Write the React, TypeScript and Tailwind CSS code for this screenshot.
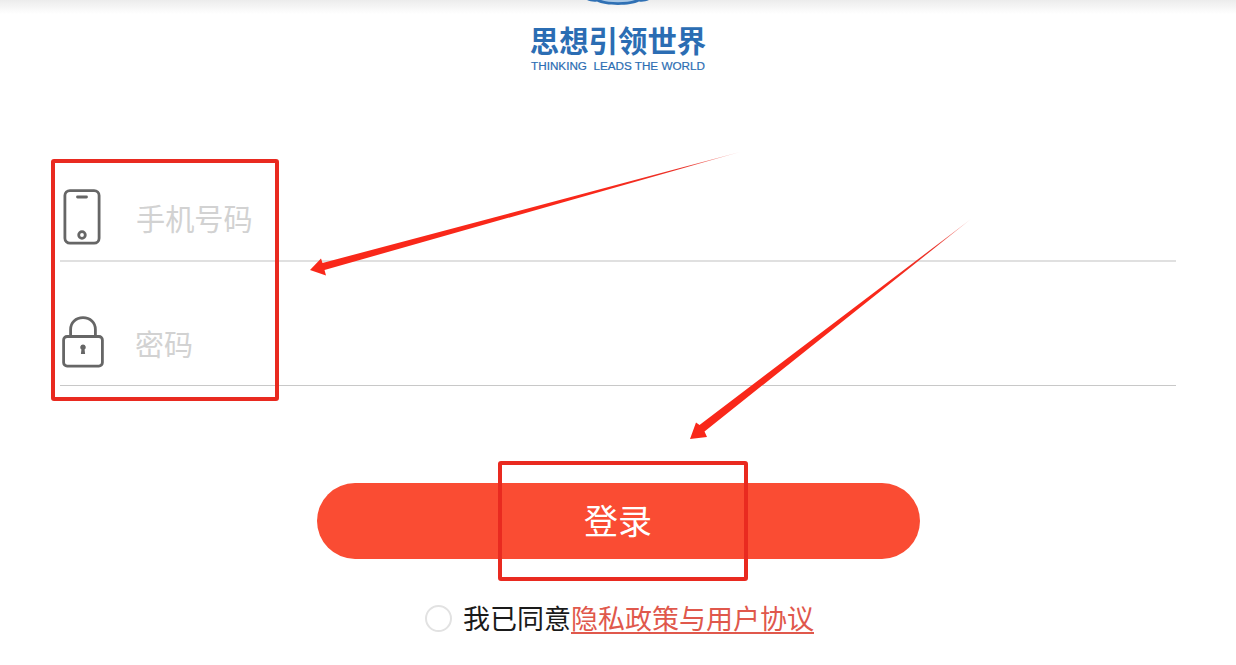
const CJK = "font-['Noto_Sans_CJK_SC','Noto_Sans',sans-serif]";

function PhoneIcon() {
  return (
    <svg width="38" height="56" viewBox="0 0 38 56" fill="none" stroke="#666666" strokeWidth="2.8">
      <rect x="1.9" y="1.6" width="34.2" height="52.6" rx="5" />
      <path d="M14.5 8h9" strokeWidth="2.8" strokeLinecap="round" />
      <circle cx="19" cy="46" r="3.3" />
    </svg>
  );
}

function LockIcon() {
  return (
    <svg width="42" height="52" viewBox="0 0 42 52" fill="none" stroke="#666666" strokeWidth="2.8">
      <path d="M8.6 21V13.5C8.6 6.5 13.8 1.6 21 1.6S33.4 6.5 33.4 13.5V21" />
      <rect x="1.6" y="20.5" width="38.8" height="29.6" rx="3.5" />
      <path d="M21 28.5a2.8 2.8 0 0 1 1.6 5.1l.5 4.4h-4.2l.5-4.4A2.8 2.8 0 0 1 21 28.5z" fill="#666666" stroke="none" />
    </svg>
  );
}

function Annotations() {
  return (
    <>
      <div className="absolute left-[51px] top-[159px] h-[242px] w-[228px] rounded-[3px] border-4 border-[#e92a20]" />
      <div className="absolute left-[498px] top-[461px] h-[120px] w-[250px] rounded-[3px] border-4 border-[#e92a20]" />
      <svg className="absolute left-0 top-0" width="1236" height="665" viewBox="0 0 1236 665">
        <defs>
          <linearGradient id="a1" x1="740" y1="152" x2="600" y2="190" gradientUnits="userSpaceOnUse">
            <stop offset="0" stopColor="#e9332a" stopOpacity="0.35" />
            <stop offset="0.4" stopColor="#e9332a" stopOpacity="1" />
            <stop offset="1" stopColor="#f9281a" />
          </linearGradient>
          <linearGradient id="a2" x1="971" y1="219" x2="880" y2="289" gradientUnits="userSpaceOnUse">
            <stop offset="0" stopColor="#e9332a" stopOpacity="0.35" />
            <stop offset="0.4" stopColor="#e9332a" stopOpacity="1" />
            <stop offset="1" stopColor="#f9281a" />
          </linearGradient>
        </defs>
        <polygon points="740,152 322.5,263 321,258.5 310,270 326,275.5 324.5,270" fill="url(#a1)" />
        <polygon points="971,219 699.5,425 696,422.5 690,439 707,437 704.5,431.5" fill="url(#a2)" />
      </svg>
    </>
  );
}

export default function App() {
  return (
    <div className={`relative h-[665px] w-[1236px] overflow-hidden bg-white ${CJK}`}>
      <div className="absolute left-0 top-0 h-[14px] w-full bg-gradient-to-b from-[#ececec] to-white" />

      <header className="relative flex h-[177px] flex-col items-center">
        <svg className="mb-[19px]" width="62" height="6" viewBox="0 0 62 6">
          <path d="M0 0C3 1.5 7 2 10 1.5C18 6 44 6 52 1.5C55 2 59 1.5 62 0H0z" fill="#2f70b4" />
          <path d="M14 0C22 3 40 3 48 0z" fill="#a9c8e6" />
        </svg>
        <div className="text-[29.4px] font-bold leading-[29px] text-[#2b6db3]">思想引领世界</div>
        <div className="mt-[5px] whitespace-pre font-['Liberation_Sans',sans-serif] text-[11.7px] leading-[13px] text-[#2b6db3] [-webkit-text-stroke:0.2px_#2b6db3]">
          THINKING  LEADS THE WORLD
        </div>
      </header>

      <div className="ml-[60px] w-[1116px]">
        <div className="flex h-[85px] items-center border-b-2 border-[#e0e0e0] pb-[4px] pl-[3px]">
          <PhoneIcon />
          <span className="ml-[35px] mt-[2px] text-[29.2px] leading-none text-[#d2d2d2]">手机号码</span>
        </div>
        <div className="flex h-[124px] items-end border-b border-[#c8c8c8] pb-[17px] pl-[2px]">
          <LockIcon />
          <span className="mb-[10px] ml-[31px] text-[29px] leading-none text-[#d2d2d2]">密码</span>
        </div>
      </div>

      <button className={`mx-auto mt-[97px] block h-[76px] w-[603px] rounded-full bg-[#fa4c33] pb-[2px] text-[34px] leading-none text-white ${CJK}`}>
        登录
      </button>

      <div className="mt-[39px] flex items-center justify-center pl-[3px] text-[27px] leading-[40px] text-[#1a1a1a]">
        <span className="mr-[11px] h-[27px] w-[27px] rounded-full border-2 border-[#e2e2e2]" />
        <span>我已同意</span>
        <a className="text-[#e0584c] underline underline-offset-[3px]">隐私政策与用户协议</a>
      </div>

      <Annotations />
    </div>
  );
}
